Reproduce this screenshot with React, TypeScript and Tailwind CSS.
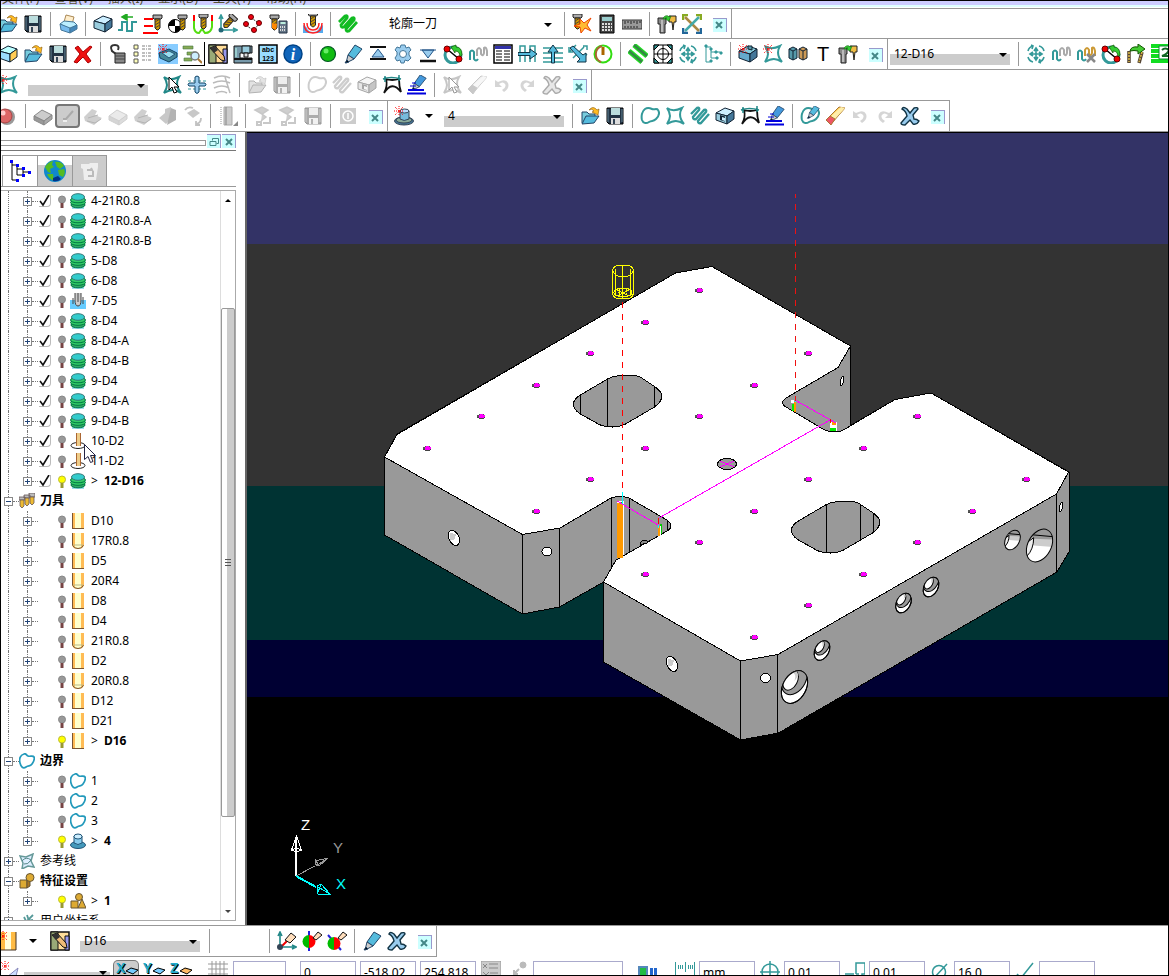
import React, { useState } from 'react';

// Small end mill reused by many toolbar icons.
const Mill = ({ t = '' }: { t?: string }) => (
  <g transform={t}>
    <path d="M0 0h9v3l-1 1H1L0 3z" fill="#aaa" stroke="#222" />
    <path d="M2 4h5v9l-2 2H4l-2-2z" fill="#c90" stroke="#222" />
    <path d="M2 7l5-3M2 10l5-3M2 13l5-3" stroke="#543" />
  </g>
);

const Spark = () => (
  <path d="M5 0v10M0 5h10M1 1l8 8M9 1L1 9" stroke="#f00" strokeDasharray="1 1" />
);

const Serp = ({ c, w = 2.4 }: { c: string; w?: number }) => (
  <path d="M1 8L7 2q3-1 2 2L3 11q0 3 3 2l8-9q3-1 2 2L8 15q0 3 3 2l8-9" fill="none" stroke={c} strokeWidth={w} />
);

const Box = ({ a = '#9cd', b = '#cef', c = '#479' }) => (
  <g stroke="#123" strokeLinejoin="round">
    <path d="M1 7l9-5 9 3-7 5z" fill={b} />
    <path d="M1 7l11 3v8L1 14z" fill={a} />
    <path d="M12 10l7-5v8l-7 5z" fill={c} />
  </g>
);

const LoopPath = ({ c = '#399' }) => (
  <path d="M5 3c-3 2-4 7-3 11 1 3 4 4 7 2s4 0 7-3 4-6 2-9c-1-2-4 0-6-1s-4-2-7 0z" fill="none" stroke={c} strokeWidth="2" />
);

const StarPath = ({ c = '#399' }) => (
  <path d="M2 2c4 3 9 3 15 0-3 5-3 10 2 16-6-4-10-4-17 0 4-6 4-10 0-16z" fill="none" stroke={c} strokeWidth="2" />
);

const PenShape = ({ f = '#5bd' }) => (
  <g stroke="#246">
    <path d="M12 1l7 4-8 10-6-4z" fill={f} />
    <path d="M5 11l6 4-8 4z" fill="#ccc" />
    <path d="M4 16l2 2-4 1z" fill="#000" />
  </g>
);

const MoveShape = ({ c = '#399' }) => (
  <path d="M10 5v10M5 10h10M8 7l2-3 2 3M8 13l2 3 2-3M7 8l-3 2 3 2M13 8l3 2-3 2M2 7q1-4 5-5M5 1l2 1-1 3M18 7q-1-4-5-5M2 13q1 4 5 5M18 13q-1 4-5 5M15 19l-2-1 1-3" fill="none" stroke={c} strokeWidth="1.6" />
);

const ToolPair = () => (
  <g stroke="#222">
    <path d="M1 4h8v6H8v9H3v-9H1z" fill="#888" />
    <path d="M5 6v12" stroke="#eee" />
    <path d="M12 2h7v6h-2l-1 8-1-8h-3z" fill="#eb4" />
    <path d="M6 5c1-4 5-4 6-2l2-1-2 5-4-2 2-1q-2-1-2 1z" fill="#3c3" stroke="#161" strokeWidth=".6" />
  </g>
);

const LinkShape = () => (
  <g>
    <circle cx="10" cy="11" r="8" fill="none" stroke="#399" strokeWidth="3" />
    <path d="M4 5l12 10" stroke="#000" strokeWidth="1.5" />
    <path d="M8 3l5-2v2q6 0 6 8l-2 2q0-6-5-6v2z" fill="#3c3" stroke="#150" strokeWidth=".7" />
    <circle cx="4" cy="5" r="3" fill="#e00" stroke="#600" />
    <circle cx="16" cy="15" r="3" fill="#e00" stroke="#600" />
  </g>
);

const icons: Record<string, React.ReactNode> = {
  open: (
    <g strokeLinejoin="round">
      <path d="M2 17V6h5l2 2h6v3" fill="#7cd" stroke="#246" />
      <path d="M2 18l4-8h13l-5 7z" fill="#5bd" stroke="#246" />
      <path d="M9 4q4-5 8 0l2-1-1 6-6-3 2-1q-2-3-5-1z" fill="#fb2" stroke="#850" strokeWidth=".6" />
    </g>
  ),
  save: (
    <g>
      <path d="M2 2h16v16H4l-2-2z" fill="#234" stroke="#000" />
      <path d="M6 2h9v7H6z" fill="#bdd" />
      <path d="M6 12h9v6H6z" fill="#ddd" />
      <path d="M8 13h2v5H8z" fill="#345" />
      <path d="M3 3v13M17 3v13" stroke="#689" />
    </g>
  ),
  print: (
    <g strokeLinejoin="round">
      <path d="M6 8l2-7 8 2-2 7z" fill="#fec" stroke="#a85" />
      <path d="M2 10l4-3 10 1 3 3-7 4z" fill="#bef" stroke="#479" />
      <path d="M2 10l10 4v5L3 16z" fill="#7be" stroke="#479" />
      <path d="M12 14l7-3v4l-7 4z" fill="#48b" stroke="#479" />
    </g>
  ),
  box: <Box />,
  boxYellow: <Box a="#9df" b="#bff" c="#fc5" />,
  boxHole: (
    <g>
      <Box />
      <path d="M5 9l5 1.500v5L5 14z" fill="#123" />
      <path d="M7 11l3 1v3l-3-1z" fill="#cef" />
    </g>
  ),
  rapid: (
    <g fill="none">
      <path d="M0 16h4V8h5v9h5V8h5" stroke="#399" strokeWidth="2" />
      <path d="M5 3h10M4 3l5-3v6z" stroke="#2a2" fill="#2a2" strokeWidth="1.5" />
    </g>
  ),
  feed: (
    <g>
      <path d="M1 5h9M1 12h9M0 19h15" stroke="#f00" strokeWidth="2" />
      <Mill t="translate(10 1)" />
    </g>
  ),
  start: (
    <g>
      <circle cx="7" cy="12" r="6.5" fill="#fff" stroke="#000" />
      <path d="M7 12V5.500A6.500 6.500 0 0 0 .5 12zM7 12v6.500A6.500 6.500 0 0 0 13.500 12z" fill="#000" />
      <Mill t="translate(10 1)" />
    </g>
  ),
  lead: (
    <g>
      <path d="M1 1v7M19 1v7" stroke="#f00" strokeWidth="2" />
      <path d="M1 7v7q1 5 5 5l3-4 3 4q6 0 7-6V7" fill="none" stroke="#5d1" strokeWidth="2" />
      <Mill t="translate(6 0)" />
    </g>
  ),
  axis: (
    <g>
      <path d="M3 16V3M3 16h14M1 5l2-4 2 4M15 14l4 2-4 2" fill="none" stroke="#399" strokeWidth="1.6" />
      <Mill t="translate(13 -1) rotate(42)" />
      <circle cx="3" cy="16" r="2.5" fill="#267" />
    </g>
  ),
  points: (
    <g fill="#e01" stroke="#600">
      <path d="M8 4l8 5-5 8M3 11l8 6" stroke="#333" strokeDasharray="2 1" fill="none" />
      <circle cx="8" cy="3" r="2.500" />
      <circle cx="16" cy="9" r="2.500" />
      <circle cx="3" cy="10" r="2.500" />
      <circle cx="11" cy="16" r="2.500" />
    </g>
  ),
  millCalc: (
    <g>
      <Mill t="translate(2 1)" />
      <path d="M11 7h8v12h-8z" fill="#678" stroke="#234" />
      <path d="M12.500 9h5" stroke="#bed" strokeWidth="2" />
      <path d="M12 13h6M12 16h6" stroke="#ddd" strokeDasharray="1 1" strokeWidth="2" />
      <path d="M4 9l5 1-1 6-4-2z" fill="#f80" />
    </g>
  ),
  collide: (
    <g>
      <path d="M0 19V11l5 3h10l5-3v8z" fill="#5ae" />
      <path d="M3 9q0 9 7 9t7-9z" fill="#fff" />
      <path d="M1 9q0 10 9 10t9-10M4 9q0 7 6 7t6-7" fill="none" stroke="#f22" strokeWidth="1.5" />
      <Mill t="translate(5.500 -2)" />
    </g>
  ),
  hatch: <Serp c="#1b2" w={2.8} />,
  serp: <Serp c="#399" />,
  serpPair: (
    <g fill="none" strokeWidth="2">
      <path d="M2 16V8q2-3 4 0v7q2 3 4 0" stroke="#399" />
      <path d="M9 12V6q2-4 4 0v4q2 3 3-1V4q2-2 3 3v5" stroke="#aaa" />
    </g>
  ),
  serpDel: (
    <g fill="none" strokeWidth="2">
      <path d="M2 16V8q2-3 4 0v7q2 3 4 0" stroke="#399" />
      <path d="M9 12V6q2-4 4 0v4q2 3 3-1V4q2-2 3 3v5" stroke="#c93" />
      <path d="M11 10l8 8M19 10l-8 8" stroke="#888" strokeWidth="2.500" />
    </g>
  ),
  millStar: (
    <g>
      <Mill t="translate(1 0)" />
      <path d="M8 5l4 4 7-5-4 7 4 6-6-3-4 5-1-6-6-1 6-2z" fill="#fb3" stroke="#e40" />
    </g>
  ),
  calc: (
    <g>
      <path d="M3 1h14v18H3z" fill="#444" stroke="#000" />
      <path d="M5 3h10v4H5z" fill="#9cc" />
      <path d="M5 10h10M5 13h10M5 16h10" stroke="#ddd" strokeWidth="2" strokeDasharray="2 1" />
    </g>
  ),
  ruler: (
    <g>
      <path d="M0 6h20v9H0z" fill="#999" stroke="#333" />
      <path d="M3 7v3M6 7v2M9 7v3M12 7v2M15 7v3M18 7v2M3 14v-2M6 14v-2M9 14v-2M12 14v-2M15 14v-2" stroke="#222" />
    </g>
  ),
  toolPair: <ToolPair />,
  crossArrows: (
    <g fill="none" strokeWidth="2.500">
      <path d="M3 3l14 14" stroke="#a84" />
      <path d="M17 3L3 17" stroke="#4aa" />
      <path d="M1 6V1h5M14 1h5v5" stroke="#8a2" />
      <path d="M1 14v5h5M14 19h5v-5" stroke="#269" />
    </g>
  ),
  del: <path d="M2 4l3-2 5 6 7-6 2 1-6 7 5 7-3 2-5-6-6 6-3-1 6-8z" fill="#e11" stroke="#a00" />,
  unlock: (
    <g>
      <path d="M8 10L4 7Q1 1 7 1q5 0 3 5" fill="none" stroke="#333" strokeWidth="2" />
      <path d="M7 9h10v10H7z" fill="#888" stroke="#222" />
      <path d="M7 12h10M7 15h10" stroke="#444" />
    </g>
  ),
  list: (
    <g>
      <path d="M1 1h4v4H1zM1 8h4v4H1zM1 15h4v4H1z" fill="#ffb" stroke="#555" />
      <path d="M9 2h10M9 5h10M9 9h10M9 12h10M9 16h10" stroke="#aaa" strokeDasharray="3 1 1 1" strokeWidth="1.5" />
    </g>
  ),
  blockNew: (
    <g>
      <path d="M0 0h20v20H0z" fill="#8cf" />
      <path d="M1 9l10-4 8 4v4l-8 5-9-4z" fill="#489" stroke="#146" />
      <path d="M4 9l7-2 6 3-6 4z" fill="#9de" stroke="#257" />
      <Spark />
    </g>
  ),
  search: (
    <g>
      <path d="M1 2h10v3H1zM5 8h9v3H5zM2 14h8v3H2z" fill="#8a5" stroke="#474" strokeWidth=".6" />
      <circle cx="13" cy="12" r="4" fill="#cef" stroke="#777" strokeWidth="1.500" />
      <path d="M16 15l4 4" stroke="#a73" strokeWidth="2" />
    </g>
  ),
  toolFrame: (
    <g>
      <path d="M1 1h18v18H1z" fill="#fd9" stroke="#111" strokeWidth="1.500" />
      <path d="M1 1h7v18H1z" fill="#9a7" stroke="#111" />
      <path d="M15 5h4v14h-4z" fill="#99e" stroke="#111" />
      <path d="M2 4l5-2 9 10 1 5-4-1z" fill="#eb7" stroke="#111" />
      <path d="M2 4l5-2 3 4-4 3z" fill="#333" />
    </g>
  ),
  machine: (
    <g>
      <path d="M1 2h18v7H7v5h12v5H1z" fill="#79a" stroke="#111" />
      <path d="M9 2h8v7H9z" fill="#9cd" stroke="#111" />
      <path d="M11 9h4v4h-4z" fill="#ddd" stroke="#111" />
      <path d="M1 15h18" stroke="#111" strokeWidth="2" />
      <path d="M3 4v9" stroke="#9cc" strokeWidth="2" />
    </g>
  ),
  abc: (
    <g>
      <path d="M1 1h18v18H1z" fill="#9df" stroke="#000" strokeWidth="1.500" />
      <text x="10" y="8" fontSize="7" fontWeight="bold" textAnchor="middle" fontFamily="Liberation Sans">abc</text>
      <text x="10" y="17" fontSize="7" fontWeight="bold" textAnchor="middle" fontFamily="Liberation Sans">123</text>
    </g>
  ),
  info: (
    <g>
      <circle cx="10" cy="10" r="9" fill="#16b" stroke="#048" strokeWidth="1.500" />
      <text x="10" y="16" fontSize="16" fontWeight="bold" fontStyle="italic" fill="#fff" textAnchor="middle" fontFamily="Liberation Serif">i</text>
    </g>
  ),
  ball: (
    <g>
      <circle cx="10" cy="10" r="7.500" fill="#1b1" stroke="#052" strokeWidth="1.200" />
      <circle cx="8" cy="7" r="2.500" fill="#6e6" />
    </g>
  ),
  redBall: (
    <g>
      <circle cx="9" cy="11" r="8" fill="#999" />
      <circle cx="7" cy="10" r="7" fill="#d66" stroke="#a44" />
      <circle cx="5" cy="7" r="2.500" fill="#fcc" />
    </g>
  ),
  pen: <PenShape />,
  planeUp: (
    <g stroke="#111" fill="#9ce">
      <path d="M2 3h16M2 15h16" strokeWidth="2" />
      <path d="M10 5l6 8H4z" stroke="#258" />
    </g>
  ),
  planeDown: (
    <g stroke="#111" fill="#9ce">
      <path d="M2 17h16" strokeWidth="2.500" />
      <path d="M10 14l6-8H4z" stroke="#258" />
      <path d="M2 6h16" stroke="#258" />
    </g>
  ),
  gear: (
    <g stroke="#479" fill="#9ce">
      <path d="M8 1h4l1 3 3-1 2 3-2 2v3l2 3-3 3-3-1-1 3H8l-1-3-3 1-2-3 2-3V8L2 6l2-3 3 1z" />
      <circle cx="10" cy="10" r="3.500" fill="#fff" />
    </g>
  ),
  link: <LinkShape />,
  table: (
    <g>
      <path d="M1 1h18v18H1z" fill="#fff" stroke="#000" strokeWidth="1.500" />
      <path d="M2 2h16v3H2z" fill="#33a" />
      <path d="M3 7h6M3 10h6M3 13h6M3 16h6M11 7h6M11 10h6M11 13h6M11 16h6" stroke="#000" />
    </g>
  ),
  arrowRight: (
    <g>
      <path d="M2 18V2h5v16M12 18V2h5v16" fill="none" stroke="#399" strokeWidth="1.500" />
      <path d="M0 8.500h12V5l7 5-7 5v-3.500H0z" fill="#5bd" stroke="#134" />
    </g>
  ),
  arrowUp: (
    <g>
      <path d="M0 4h20M0 9h20M0 14h20M0 18h20" stroke="#399" strokeWidth="1.500" />
      <path d="M8.500 19V8H5l5-7 5 7h-3.500v11z" fill="#5bd" stroke="#134" />
    </g>
  ),
  arrowDiag: (
    <g>
      <path d="M1 8l7-7M5 14L16 3M11 18l8-8M1 3v5h4M15 2h4v4" fill="none" stroke="#399" strokeWidth="1.500" />
      <path d="M2 4l3-2 10 9 3-2v9h-9l3-3z" fill="#5bd" stroke="#134" />
    </g>
  ),
  clock: (
    <g fill="none" strokeWidth="2">
      <circle cx="10" cy="10" r="8.500" stroke="#3d1" />
      <path d="M9 2A8.500 8.500 0 0 0 8 18" stroke="#a63" />
      <path d="M10 3v8" stroke="#a60" strokeWidth="3" />
    </g>
  ),
  stripes: (
    <g>
      <path d="M1 7l13 11M6 1l13 11" stroke="#2d2" strokeWidth="5" />
      <path d="M1 7l13 11M6 1l13 11" stroke="#384" strokeWidth="2.500" />
    </g>
  ),
  target: (
    <g fill="none" stroke="#000">
      <path d="M1 1h18v18H1zM10 1v18M1 10h18" />
      <circle cx="10" cy="10" r="5.500" />
      <path d="M1 6V1h5zM14 1h5v5zM1 14v5h5zM19 14v5h-5z" fill="#399" />
    </g>
  ),
  move: <MoveShape />,
  tree: (
    <g fill="#399" stroke="#399">
      <path d="M3 2v16h4M3 3h5M8 5v9h5M8 8h9" fill="none" />
      <path d="M2 1h2v2H2zM7 4h2v2H7zM12 7h2v2h-2zM7 16h2v2H7zM13 13h2v2h-2zM17 8h2v2h-2z" />
    </g>
  ),
  boxNew: (
    <g>
      <Box a="#6ac" b="#8cd" />
      <path d="M10 2v3l4 1V2z" fill="#59a" stroke="#123" />
      <Spark />
    </g>
  ),
  starNew: (
    <g>
      <StarPath />
      <Spark />
    </g>
  ),
  star: <StarPath />,
  mirror: (
    <g stroke="#123">
      <path d="M1 5l4-2 4 2v9l-4 2-4-2z" fill="#59a" />
      <path d="M11 5l4-2 4 2v9l-4 2-4-2z" fill="#c95" />
      <path d="M5 7v9M15 7v9M1 5l4 2 4-2M11 5l4 2 4-2" fill="none" />
    </g>
  ),
  letterT: <text x="10" y="17" fontSize="20" textAnchor="middle" fontFamily="Liberation Sans">T</text>,
  swap: (
    <g>
      <path d="M3 7v12M16 8l-3 11" stroke="#543" strokeWidth="3.500" />
      <path d="M3 8v10M16 8l-3 10" stroke="#db4" strokeWidth="1.500" strokeDasharray="2 1" />
      <path d="M4 7q1-5 8-4V0l7 5-7 5V7q-4-1-8 0z" fill="#4c3" stroke="#150" />
    </g>
  ),
  refresh: (
    <g>
      <path d="M0 2h20M0 7h20M0 12h20M0 17h20" stroke="#1d2" strokeWidth="4" />
      <path d="M8 2h12v13H8z" fill="#fff" stroke="#183" />
      <path d="M11 6q3-3 7 0-1 4-7 6h8" fill="none" stroke="#162" strokeWidth="2" />
    </g>
  ),
  starCursor: (
    <g>
      <StarPath c="#288" />
      <path d="M7 2v13l3-3 2 6 3-1-3-5h5z" fill="#fff" stroke="#000" />
    </g>
  ),
  plus: (
    <g>
      <path d="M1 6h18M1 14h18" stroke="#399" strokeDasharray="3 2" />
      <path d="M8 2q2-2 4 0v6h6q2 2 0 3h-6v6q-2 3-4 0v-6H2q-2-1 0-3h6z" fill="#9ce" stroke="#146" />
    </g>
  ),
  ribs: (
    <path d="M2 3q8-4 16 0M1 8q9-4 17 0M2 13q8-4 15 0M4 18q6-3 11 0M13 2l5 16" fill="none" stroke="#bbb" strokeWidth="1.500" />
  ),
  loop: <LoopPath />,
  surf: (
    <g fill="none">
      <path d="M2 18Q6 11 4 4q6 2 13 0 0 7 2 13Q10 5 2 18z" stroke="#111" strokeWidth="1.800" />
      <path d="M1 4q8-3 18 0M3 1v6M17 0v6" stroke="#288" strokeWidth="1.500" />
    </g>
  ),
  penLine: (
    <g>
      <g transform="translate(3 -1) scale(.85)">
        <PenShape f="#49d" />
      </g>
      <path d="M1 15h16M0 18.500h19" stroke="#00d" strokeWidth="2" />
      <path d="M3 11h6M5 8h4" stroke="#00d" />
    </g>
  ),
  loopPen: (
    <g>
      <LoopPath />
      <g transform="translate(6 -1) scale(.7)">
        <PenShape />
      </g>
    </g>
  ),
  eraser: (
    <g stroke="#a73" strokeLinejoin="round">
      <path d="M1 14L14 1l6 1L7 17z" fill="#fc5" />
      <path d="M5 11L16 1l4 1L8 15z" fill="#fea" stroke="none" />
      <path d="M1 14l4-4 5 3-4 6z" fill="#e56" />
    </g>
  ),
  undo: <path d="M3 5v7h7L7 9q4-3 6 0t-3 6l2 2q6-4 4-9T6 7z" fill="#999" />,
  redo: <path d="M17 5v7h-7l3-3q-4-3-6 0t3 6l-2 2Q2 13 4 8t10-1z" fill="#999" />,
  bigX: <path d="M2 3q1-3 5 0l3 4 4-5q4-1 4 1l-5 6 1 4q3 0 5 2-2 4-6 3l-3-4-5 5q-4 0-4-2l6-7q-1-5-5-7z" fill="#9ce" stroke="#134" strokeWidth="1.400" />,
  slab: (
    <g stroke="#888">
      <path d="M1 10l8-6 10 5-8 6z" fill="#ccc" />
      <path d="M1 10l10 5v4L1 14z" fill="#999" />
      <path d="M11 15l8-6v4l-8 6z" fill="#aaa" />
    </g>
  ),
  slabCut: (
    <g fill="#888">
      <path d="M1 11l8-8 5 2-2 4 7 3-8 7-9-4z" />
      <path d="M5 12l10-3M4 15l8 2 6-4" stroke="#444" fill="none" />
    </g>
  ),
  ramp: (
    <g>
      <path d="M5 13h3l7-8" fill="none" stroke="#aaa" strokeWidth="2" />
      <path d="M5 15h4" stroke="#eee" strokeWidth="2" />
    </g>
  ),
  wallCut: (
    <g fill="#777">
      <path d="M1 12l6-5V3l6-2v12l-5 5z" />
      <path d="M13 2l5 2v10l-9 5z" fill="#444" />
    </g>
  ),
  spin: (
    <g fill="#777">
      <path d="M4 7l7-4 6 4-7 5z" />
      <path d="M2 4q3-4 8-2M18 12q0 5-5 6M13 15v4l4 0" fill="none" stroke="#666" strokeWidth="1.800" />
    </g>
  ),
  bars: (
    <g>
      <path d="M3 1v18" stroke="#999" strokeDasharray="1 1" />
      <path d="M6 1h8v18H6z" fill="#ccc" stroke="#aaa" />
      <path d="M8 1v18" stroke="#888" />
      <path d="M20 15v5h-5z" fill="#888" />
    </g>
  ),
  route: (
    <g fill="none" stroke="#777">
      <path d="M2 4l7-3 6 3-6 4zM9 8l4 3-5 4" fill="#888" strokeWidth="1.500" />
      <path d="M4 16h4v3H4zM10 17h7v-6" strokeWidth="2" />
    </g>
  ),
  power: (
    <g>
      <path d="M2 2h16v16H2z" fill="#ccc" />
      <circle cx="10" cy="10" r="5" fill="none" stroke="#fff" strokeWidth="1.500" />
      <path d="M10 7v6" stroke="#fff" strokeWidth="1.500" />
    </g>
  ),
  hatNew: (
    <g stroke="#345">
      <ellipse cx="10" cy="15" rx="9.500" ry="4" fill="#479" />
      <ellipse cx="10" cy="14" rx="8" ry="3" fill="#8a9" />
      <path d="M6 5v8q4 3 9 0V5z" fill="#7bd" />
      <ellipse cx="10.500" cy="5" rx="4.500" ry="2" fill="#bdf" />
      <Spark />
    </g>
  ),
  toolNew: (
    <g>
      <path d="M3 1h15v18H3z" fill="#fb4" />
      <path d="M7 1h6v18H7z" fill="#ffd" />
      <path d="M3 19h15M18 1v18" stroke="#432" />
      <Spark />
    </g>
  ),
  axisTool: (
    <g>
      <path d="M3 16V3M3 16h14M1 5l2-4 2 4M15 14l4 2-4 2" fill="none" stroke="#288" strokeWidth="1.600" />
      <path d="M5 15l6-6" stroke="#e00" strokeWidth="2" />
      <path d="M8 9l6-7 5 4-6 6z" fill="#fdb" stroke="#111" />
      <circle cx="3" cy="16" r="3" fill="#345" />
    </g>
  ),
  ballSplit: (
    <g>
      <path d="M7 0v20" stroke="#22d" strokeWidth="2" />
      <path d="M7 4a6.500 6.500 0 0 0 0 13z" fill="#0b0" />
      <path d="M7 4a6.500 6.500 0 0 1 0 13z" fill="#f00" />
      <path d="M11 7l5-6 4 3-6 5z" fill="#fdb" stroke="#111" />
    </g>
  ),
  ballTilt: (
    <g>
      <path d="M1 4l13 15" stroke="#22d" strokeWidth="2" />
      <path d="M7 6a6.500 6.500 0 0 0 0 13z" fill="#0b0" />
      <path d="M7 6a6.500 6.500 0 0 1 0 13z" fill="#f00" />
      <path d="M11 7l5-6 4 3-6 5z" fill="#fdb" stroke="#111" />
    </g>
  ),
  wand: (
    <g>
      <path d="M3 18l4-2 11-9-2 8-6 5z" fill="#cdf" stroke="#88b" />
      <Spark />
    </g>
  ),
  grid: <path d="M4 0v20M8 0v20M12 0v20M16 0v20M0 3h20M0 8h20M0 13h20" stroke="#999" />,
  xyList: (
    <g>
      <path d="M0 0h20v20H0z" fill="#ccc" stroke="#999" />
      <path d="M2 3l4 4M6 3L2 7M8 3h9M8 7h9M2 11l3 3 3-3M9 12h8" stroke="#888" fill="none" />
    </g>
  ),
  snap: (
    <g stroke="#bbb" fill="#bbb">
      <circle cx="15" cy="4" r="3" />
      <path d="M11 8l-5 5M6 9v4h4" fill="none" strokeWidth="2" />
    </g>
  ),
  screen: (
    <g>
      <path d="M1 6h8v12H1z" fill="#2b4" stroke="#58b" strokeWidth="2" />
      <path d="M12 7h3v10h-3zM16 7h3v10h-3z" fill="#26c" />
    </g>
  ),
  dim: <path d="M.5 1v19M19.500 1v19M10.500 1v10M3.500 4v4M5.500 4v4M7.500 4v4M13.500 4v4M15.500 4v4M17.500 4v4" stroke="#399" fill="none" />,
  cross: (
    <g fill="none" stroke="#399" strokeWidth="1.500">
      <circle cx="10" cy="11" r="8" />
      <path d="M10 0v20M0 11h20" />
    </g>
  ),
  stock: <path d="M11 13V2h9v11h-3v6M11 13h3M0 13h9" fill="none" stroke="#399" strokeWidth="1.500" />,
  diam: (
    <g fill="none" stroke="#399" strokeWidth="1.500">
      <circle cx="9" cy="11" r="6.500" />
      <path d="M3 18L17 3" />
    </g>
  ),
  tick: <path d="M2 13l4 4L18 2" fill="none" stroke="#399" strokeWidth="1.500" />,
};

const Icon = ({ name }: { name: string }) => {
  const off = name.startsWith('~');
  return (
    <svg viewBox="0 0 20 20" className={`h-5 w-5 shrink-0 ${off ? 'opacity-40 grayscale' : ''}`}>
      {icons[off ? name.slice(1) : name]}
    </svg>
  );
};

const Sep = () => (
  <span className="flex w-[10px] shrink-0 justify-center">
    <span className="h-6 w-px bg-[#999]" />
  </span>
);

// A "|" in the list draws a separator, a leading "~" greys the icon out.
const Tools = ({ names }: { names: string[] }) => (
  <>
    {names.map((n, i) =>
      n === '|' ? (
        <Sep key={i} />
      ) : (
        <button
          key={i}
          type="button"
          aria-label={n.replace('~', '')}
          disabled={n.startsWith('~')}
          className={`flex h-6 w-[25px] shrink-0 items-center justify-center ${n === 'ramp' ? 'rounded border-2 border-[#777] bg-[#ccc]' : ''} ${n === 'search' ? 'border-r border-b border-black' : ''}`}
        >
          <Icon name={n} />
        </button>
      )
    )}
  </>
);

const CloseBox = () => (
  <button type="button" aria-label="close" className="flex h-[14px] w-[14px] items-center justify-center border-t border-r border-[#99c] bg-[#cff]">
    <svg viewBox="0 0 8 8" className="h-2 w-2">
      <path d="M1 1l6 6M7 1L1 7" stroke="#488" strokeWidth="2" />
    </svg>
  </button>
);

const CloseCell = () => (
  <span className="flex w-[27px] shrink-0 items-center justify-center pl-1 pt-0.5">
    <CloseBox />
  </span>
);

const DownArrow = () => (
  <svg viewBox="0 0 8 4" className="h-1 w-2 shrink-0">
    <path d="M0 0h8L4 4z" />
  </svg>
);

interface ComboProps {
  label: string;
  value: string;
  className: string;
}

const Combo = ({ label, value, className }: ComboProps) => (
  <div className={`relative h-[22px] shrink-0 ${className}`}>
    <select aria-label={label} className="h-full w-full appearance-none pl-1 text-xs outline-none">
      <option>{value}</option>
    </select>
    <span className="pointer-events-none absolute top-[10px] right-[3px]">
      <DownArrow />
    </span>
  </div>
);

const shaded = 'w-[120px] bg-linear-to-b from-white from-50% to-[#ccc] to-50%';

const ArrowButton = () => (
  <button type="button" aria-label="more" className="flex h-6 w-[25px] shrink-0 items-center justify-center">
    <DownArrow />
  </button>
);

interface Node {
  label: string;
  kind: string;
  root?: boolean;
  open?: boolean;
  active?: boolean;
  check?: boolean;
}

const path = (label: string, kind = 'path'): Node => ({ label, kind, check: true });
const tool = (label: string): Node => ({ label, kind: label.includes('R') ? 'ballTool' : 'tool' });

const nodes: Node[] = [
  path('4-21R0.8'),
  path('4-21R0.8-A'),
  path('4-21R0.8-B'),
  path('5-D8'),
  path('6-D8'),
  path('7-D5', 'drill'),
  path('8-D4'),
  path('8-D4-A'),
  path('8-D4-B'),
  path('9-D4'),
  path('9-D4-A'),
  path('9-D4-B'),
  path('10-D2', 'swarf'),
  path('11-D2', 'swarf'),
  { ...path('12-D16'), active: true },
  { label: '刀具', kind: 'tools', root: true, open: true },
  ...['D10', '17R0.8', 'D5', '20R4', 'D8', 'D4', '21R0.8', 'D2', '20R0.8', 'D12', 'D21'].map(tool),
  { ...tool('D16'), active: true },
  { label: '边界', kind: 'bound', root: true, open: true },
  { label: '1', kind: 'bound' },
  { label: '2', kind: 'bound' },
  { label: '3', kind: 'bound' },
  { label: '4', kind: 'hat', active: true },
  { label: '参考线', kind: 'pattern', root: true },
  { label: '特征设置', kind: 'feature', root: true, open: true },
  { label: '1', kind: 'shapes', active: true },
  { label: '用户坐标系', kind: 'planes', root: true },
];

const nodeIcons: Record<string, React.ReactNode> = {
  path: (
    <g>
      <path d="M2 11h12v5H2z" fill="#9de" />
      <ellipse cx="8" cy="12" rx="7" ry="2.800" fill="#3a6" stroke="#074" />
      <ellipse cx="8" cy="9.500" rx="7.500" ry="2.800" fill="#3c6" stroke="#074" />
      <ellipse cx="8" cy="7" rx="7.500" ry="2.800" fill="#3c6" stroke="#074" />
      <ellipse cx="8" cy="4" rx="6.500" ry="3.300" fill="#3cc" stroke="#377" />
    </g>
  ),
  drill: (
    <g>
      <path d="M0 7h16v9H0z" fill="#6cf" />
      <path d="M5 0v7q0 6 3 6t3-6V0" fill="#ccc" stroke="#444" />
      <path d="M8 0v9M3 5v6M13 4v7" stroke="#444" />
    </g>
  ),
  swarf: (
    <g>
      <ellipse cx="8" cy="12.500" rx="7" ry="3" fill="#fff" stroke="#222" />
      <path d="M6 0h5v13H6z" fill="#ec8" />
      <path d="M6.500 0v13M10.500 0v13" stroke="#a63" />
    </g>
  ),
  tools: (
    <g stroke="#655" strokeWidth=".8">
      <path d="M0 4h6v3H0zM5 2h6v3H5zM10 0h6v4h-6z" fill="#bbb" />
      <path d="M1 7h4v6l-2 2-2-2zM6 5h4v6l-2 2-2-2zM11 4h4v6l-2 2-2-2z" fill="#eb3" />
    </g>
  ),
  tool: (
    <g>
      <path d="M2 0h12v15H2z" fill="#fb5" />
      <path d="M5 0h6v15H5z" fill="#ffc" />
      <path d="M2 15.500h12M2.500 0v15" stroke="#753" />
    </g>
  ),
  ballTool: (
    <g>
      <path d="M2 0h12v12q-1 4-6 4t-6-4z" fill="#fb5" />
      <path d="M5 0h6v15H5z" fill="#ffc" />
      <path d="M2.500 0v12q1 3.500 5.500 3.500t5.500-3.500" stroke="#753" fill="none" />
      <path d="M3 12h10" stroke="#bb8" />
    </g>
  ),
  bound: <path d="M5 1C1 2 0 6 1 10c1 4 3 6 6 4s4 0 6-3 3-5 2-7-4 0-6-1-2-3-4-2z" fill="none" stroke="#29b" strokeWidth="1.700" />,
  hat: (
    <g stroke="#257">
      <ellipse cx="8" cy="12" rx="7.500" ry="3.500" fill="#49b" />
      <path d="M4 3v7q4 3 8 0V3z" fill="#8ce" />
      <ellipse cx="8" cy="3.500" rx="4" ry="2.500" fill="#cef" />
    </g>
  ),
  pattern: (
    <g fill="none" stroke="#699">
      <path d="M1 3l6 1 7-3-2 7 3 6-6-1-6 3 1-6z" fill="#def" strokeWidth="1.500" />
      <path d="M3 8q4-5 9-1-3 5-7 4" stroke="#588" />
    </g>
  ),
  feature: (
    <g stroke="#653" fill="#da3">
      <path d="M1 7h7v8H1z" />
      <path d="M8 7l3 2v4l-3 2z" fill="#a72" />
      <circle cx="11" cy="4.500" r="4" />
    </g>
  ),
  shapes: (
    <g stroke="#653" fill="#da3">
      <circle cx="9" cy="4" r="3.500" />
      <path d="M1 8h7v7H1z" />
      <path d="M12 6l4 9H8z" />
    </g>
  ),
  planes: <path d="M2 14L14 2M5 4l5 10M2 9l12-2M8 2l2 6" stroke="#599" strokeWidth="1.800" />,
};

const Expander = ({ open }: { open?: boolean }) => (
  <button type="button" aria-label={open ? 'collapse' : 'expand'} className="flex h-[9px] w-[9px] shrink-0 items-center justify-center border border-[#888]">
    <svg viewBox="0 0 7 7" className="h-[7px] w-[7px] shrink-0">
      <path d={open ? 'M1 3.500h5' : 'M1 3.500h5M3.500 1v5'} stroke="#247" />
    </svg>
  </button>
);

const Bulb = ({ on }: { on?: boolean }) => (
  <svg viewBox="0 0 12 16" className="h-4 w-3 shrink-0">
    <circle cx="6" cy="6.500" r="3.500" fill={on ? '#ff0' : '#999'} stroke={on ? '#bb3' : '#888'} />
    <path d="M4.500 10h3v5h-3z" fill={on ? '#993' : '#744'} />
  </svg>
);

const VLine = ({ show = true }: { show?: boolean }) => (
  <span className={`w-px flex-1 ${show ? 'border-l border-dotted border-[#777]' : ''}`} />
);

const TreeRow = ({ node, last }: { node: Node; last: boolean }) => {
  const [checked, setChecked] = useState(true);
  const label = (
    <span className="whitespace-nowrap">
      {node.active && <span className="mr-1.5">{'>'}</span>}
      <span className={node.active || (node.root && node.open) ? 'font-bold' : ''}>{node.label}</span>
    </span>
  );

  if (node.root) {
    return (
      <li className="flex h-5 items-center pl-[3px]">
        <span className="flex h-full w-[9px] flex-col items-center">
          <VLine />
          <Expander open={node.open} />
          <VLine />
        </span>
        <span className="w-1.5 border-t border-dotted border-[#777]" />
        <svg viewBox="0 0 16 16" className="mr-[5px] h-4 w-4">{nodeIcons[node.kind]}</svg>
        {label}
      </li>
    );
  }

  return (
    <li className="flex h-5 items-center">
      <span className="flex h-full w-[22px] flex-col pl-[7px]">
        <VLine />
      </span>
      <span className="flex h-full w-[9px] flex-col items-center">
        <VLine />
        <Expander />
        <VLine show={!last} />
      </span>
      <span className="w-1.5 border-t border-dotted border-[#777]" />
      <span className="w-[18px] pl-px">
        {node.check && (
          <label className="relative block h-3 w-3 rounded-br border-r border-b border-[#bbb]">
            <input type="checkbox" aria-label={node.label} checked={checked} onChange={() => setChecked(!checked)} className="absolute inset-0 appearance-none" />
            {checked && (
              <svg viewBox="0 0 12 12" className="pointer-events-none absolute inset-0 h-3 w-3">
                <path d="M1 6l3 4 6-10" fill="none" stroke="#111" strokeWidth="1.600" />
              </svg>
            )}
          </label>
        )}
      </span>
      <Bulb on={node.active} />
      <svg viewBox="0 0 16 16" className="mr-[5px] ml-0.5 h-4 w-4">{nodeIcons[node.kind]}</svg>
      {label}
    </li>
  );
};

const SidePanel = () => (
  <aside className="flex w-[246px] shrink-0 flex-col border-r-2 border-[#666] pr-[9px]">
    <div className="flex h-[19px] items-center gap-px border-b border-[#777]">
      <span className="mt-1 h-[6px] flex-1 border border-l-0 border-[#999]" />
      <button type="button" aria-label="restore" className="flex h-[14px] w-[14px] items-center justify-center border-t border-r border-[#99c] bg-[#cff]">
        <svg viewBox="0 0 10 10" className="h-[10px] w-[10px]">
          <path d="M3.500 3.500v-2h6v5h-2M1 4.500h6v4H1z" fill="none" stroke="#488" />
        </svg>
      </button>
      <CloseBox />
    </div>
    <div className="flex h-9 items-end border-b border-[#999] pt-1 pl-px">
      <button type="button" aria-label="tree" className="flex h-full w-[35px] items-center justify-center border-t border-l border-[#999]">
        <svg viewBox="0 0 22 22" className="h-[22px] w-[22px]">
          <path d="M3 1v19h6M3 5h5M8 5v10h7M8 9h6v5M14 12h6" fill="none" stroke="#000" />
          <path d="M1 0h3v3H1zM7 4h3v3H7zM13 7h3v3h-3zM19 11h3v3h-3zM13 14h3v3h-3zM7 19h3v3H7z" fill="#00f" />
        </svg>
      </button>
      <button type="button" aria-label="web" className="flex h-full w-[35px] items-center justify-center border-t border-l border-[#999] bg-linear-to-b from-white from-30% to-[#ccc] to-30%">
        <svg viewBox="0 0 22 22" className="h-[22px] w-[22px]">
          <circle cx="11" cy="11" r="11" fill="#18c" />
          <path d="M1 7q3-5 8-6l-1 4 2 2-4 2 1 4-3-1zM11 2q6-1 9 4l-4 3-3-2zM14 10l6-1q2 4-1 8l-4-2zM3 14l6 0 1 7q-5-2-7-7z" fill="#5b2" />
          <path d="M9 18l5-2 3 3q-3 3-8 2z" fill="#038" />
        </svg>
      </button>
      <button type="button" aria-label="recycle" className="flex h-full w-[35px] items-center justify-center border-t border-x border-[#999] bg-[#ccc]">
        <svg viewBox="0 0 20 20" className="h-5 w-5">
          <path d="M1 3h8l1-1h8v4l-2 13H4L3 8 1 7z" fill="#eee" />
          <path d="M7 9h5l-1-2M13 10v5H8" fill="none" stroke="#bbb" strokeWidth="2" />
        </svg>
      </button>
    </div>
    <div className="mt-[3px] mb-1 flex min-h-0 flex-1 border-t border-r border-b border-[#aaa]">
      <ul className="relative min-w-0 flex-1 overflow-hidden text-xs">
        {nodes.map((n, i) => (
          <TreeRow key={i} node={n} last={!!nodes[i + 1]?.root} />
        ))}
        <li aria-hidden className="pointer-events-none absolute top-[253px] left-[83px]">
          <svg viewBox="0 0 12 19" className="h-[19px] w-3">
            <path d="M.5.5v15l3.500-3 2.500 6 2.500-1-2.500-6h5z" fill="#fff" stroke="#224" />
          </svg>
        </li>
      </ul>
      <div className="flex w-[15px] flex-col border-l border-[#ddd]">
        <button type="button" aria-label="up" className="flex h-[18px] items-center justify-center">
          <svg viewBox="0 0 6 3" className="h-[3px] w-1.5"><path d="M0 3h6L3 0z" /></svg>
        </button>
        <span className="grow-[100]" />
        <span className="flex grow-[508] items-center justify-center rounded-xs border border-[#999] bg-linear-to-r from-white from-45% to-[#ccc] to-45%">
          <span className="h-[7px] w-1.5 border-y border-[#555] py-0.5">
            <span className="block h-px bg-[#555]" />
          </span>
        </span>
        <span className="grow-[86]" />
        <button type="button" aria-label="down" className="flex h-[18px] items-center justify-center">
          <svg viewBox="0 0 6 3" className="h-[3px] w-1.5"><path d="M0 0h6L3 3z" fill="#444" /></svg>
        </button>
      </div>
    </div>
  </aside>
);

const pocket = 'M580.500 395l27-16q5-3 12-3.500h14q6 .5 9 3l12 8q7 5 7.500 9.500-.5 6-7.500 11l-29 17q-6 3-13 3-10 0-16-4l-16-9q-7-4-7-10 0-5 7-9z';

// Counterbored hole on the right-hand face.
const Bore = ({ x, y, s }: { x: number; y: number; s: number }) => (
  <g transform={`translate(${x} ${y}) scale(${s})`} stroke="#000" strokeWidth={1 / s} shapeRendering="auto">
    <ellipse rx="12" ry="18" transform="rotate(28)" fill="#fff" />
    <g clipPath="url(#hole)">
      <ellipse rx="12" ry="18" transform="translate(0 -9) rotate(28)" fill="#999" />
      <ellipse rx="7" ry="11" transform="translate(-4 -7) rotate(28)" fill="#fff" />
      <path d="M-4-15q7 0 4 9l4-6-2-5z" fill="#ccc" stroke="none" />
    </g>
    <ellipse rx="12" ry="18" transform="rotate(28)" fill="none" />
  </g>
);

const Scoop = ({ x, y, s }: { x: number; y: number; s: number }) => (
  <g transform={`translate(${x} ${y}) scale(${s})`} strokeWidth={1 / s} shapeRendering="auto">
    <g clipPath="url(#hole)">
      <path d="M-20-20h40v40h-40z" fill="#fff" />
      <path d="M-20-20h40V2L-6 0z" fill="#ccc" />
      <path d="M-20-20h40v14l-26-1z" fill="#999" />
      <path d="M-7-11l22 2M-6-8q0 12-7 19-4-8 0-14z" fill="#eee" stroke="#000" />
    </g>
    <ellipse rx="12" ry="18" transform="rotate(28)" fill="none" stroke="#000" />
  </g>
);

const Viewport = () => {
  const dots: [number, number][] = [];
  for (let r = 0; r < 4; r++) {
    for (let c = 0; c < 6; c++) {
      dots.push([699.5 + r * 109 - c * 54.5, 290.7 + r * 63 + c * 31.5]);
    }
  }

  return (
    <svg viewBox="247 132 921 793" preserveAspectRatio="xMinYMin slice" className="h-full w-full" shapeRendering="crispEdges">
      <defs>
        <clipPath id="hole">
          <ellipse rx="12" ry="18" transform="rotate(28)" />
        </clipPath>
      </defs>
      <rect x="247" y="132" width="2000" height="1600" fill="#000" />
      <rect x="247" y="133" width="2000" height="111" fill="#336" />
      <rect x="247" y="244" width="2000" height="242" fill="#333" />
      <rect x="247" y="486" width="2000" height="154" fill="#033" />
      <rect x="247" y="640" width="2000" height="57" fill="#003" />

      {/* body and top face */}
      <path d="M384.500 457v78l138 79 37-7 44-25v80l137 78 38-7 278.500-161 12-20v-80L931 393l-36 6.500-44.500 26V346L712 267l-36 6-279 161z" fill="#999" stroke="#000" />
      <path
        d="M384.500 457l12.500-22.500L675.500 273l36.500-6.500L850.500 346 838 367.500 786 398q-7 5 0 9l37 22q6 3 10 3 8 0 12-3l50-29.500 36-6.500 137.500 79-12 22L778 654.500l-37.500 6.500-137-79 12.500-22 51-29q8-5 0-11l-38-22q-9-3-18 0l-51 30-37.500 6.500z"
        fill="#fff"
        stroke="#000"
      />
      <path d="M522.500 535v79M559.500 528v79M611.500 498v70M629.500 498v55M667.500 520v11M740.500 661v79M777.500 654v79M1056.500 494v79M850.500 346v79M603.500 582v79" stroke="#000" />

      <path d={pocket} fill="#999" stroke="#000" />
      <path d={pocket} fill="#999" stroke="#000" transform="translate(218 126)" />
      <path d="M580.500 395v19M607.500 379v47M654.500 387v20M826.500 505v47M860.500 505v35M873.500 513v20" stroke="#000" />

      {dots.map(([x, y], i) => (
        <g key={i} transform={`translate(${Math.floor(x)} ${Math.floor(y)})`}>
          <path d="M-2-2h5v1h1v2H-4v-2h2z" fill="#555" />
          <path d="M-2-1h6v3h-6zM-1-2h3v1h-3z" fill="#f0f" />
          <path d="M-4 1h2v1h5V1h1v1H3v1h-5V2h-2z" fill="#444" />
        </g>
      ))}
      <ellipse cx="727" cy="464" rx="9.500" ry="5.500" fill="#999" stroke="#000" />
      <path d="M720 461l14 6M734 461l-14 6" stroke="#f0f" />

      {/* side holes */}
      <g stroke="#000" fill="#fff">
        <ellipse cx="454" cy="538" rx="5" ry="8" transform="rotate(-25 454 538)" />
        <ellipse cx="547" cy="551.500" rx="5" ry="4.500" />
        <ellipse cx="672" cy="664" rx="5" ry="8" transform="rotate(-25 672 664)" />
        <ellipse cx="765.500" cy="678" rx="5" ry="4.500" />
        <ellipse cx="842" cy="381" rx="1.500" ry="5" transform="rotate(12 842 381)" />
        <ellipse cx="1061" cy="507" rx="1.500" ry="5" transform="rotate(12 1061 507)" />
      </g>
      <path d="M450 533l6 1-1 5-5 2zM668 659l6 1-1 5-5 2z" fill="#ccc" />
      <path d="M640 545q0-4 5-5 4 1 2 3z" fill="#888" stroke="#000" />
      <Bore x={794.5} y={687} s={0.97} />
      <Bore x={822} y={650.5} s={0.58} />
      <Bore x={903.5} y={603} s={0.58} />
      <Bore x={931} y={587} s={0.58} />
      <Scoop x={1012.5} y={540} s={0.58} />
      <Scoop x={1039.5} y={545.5} s={0.97} />

      {/* toolpath */}
      <rect x="617" y="503" width="6" height="55" fill="#f90" />
      <rect x="623" y="503" width="1" height="52" fill="#fff" />
      <path d="M617 501h7v2h-7z" fill="#fff" />
      <path d="M620 502h3v2h-3zM661 526h1v8h-1zM660 524h2v2h-2z" fill="#0c0" />
      <path d="M658 526h2v10h-2z" fill="#f90" />
      <path d="M660 526h1v9h-1z" fill="#fff" />
      <path d="M791 400h3v3h-3z" fill="#fff" />
      <path d="M792 404h2v7h-2z" fill="#0e0" />
      <path d="M794 402h2v10h-2z" fill="#f90" />
      <path d="M830 422h7v9h-7z" fill="#fff" />
      <path d="M832 422h4v3h-4z" fill="#f90" />
      <path d="M830 428h6v3h-6z" fill="#0e0" />
      <path d="M617 501l43 25M659 518l171-98 6 3M795 400l41 23" fill="none" stroke="#f0f" />
      <path d="M658.500 518v6M830.500 419v4" stroke="#f00" />
      <path d="M622.500 492v12M658.500 525v3M795.500 399v3" stroke="#0ff" />
      <path d="M622.500 302v190" stroke="#f00" strokeDasharray="6 6" />
      <path d="M795.500 194v4M795.500 204v197" stroke="#e11" strokeDasharray="6 6" />

      {/* cutter */}
      <g fill="none" stroke="#ff0">
        <path d="M612.500 271q1-5 5-5.500h11q4 .5 5 5.500v22q-1 5-5 5.500h-11q-4-.5-5-5.500zM615.500 269v27M630.500 269v27M622.500 266v32M613 271q2 6 10 6t10-6" />
        <ellipse cx="623" cy="292.500" rx="9" ry="4.500" />
        <ellipse cx="623" cy="292.500" rx="4" ry="4.500" />
        <path d="M617 290l12 6M629 290l-12 6" />
      </g>

      {/* axis triad */}
      <path d="M296 876V837" stroke="#fff" strokeWidth="2" />
      <path d="M291.500 850l5-14 5 14q-5 3-10 0zM291.500 850q5-3 10 0M296.500 836v15" fill="none" stroke="#fff" />
      <path d="M296 876l19-10M315 861l13-3-9 8-4-2zM316 866l12-8M315 859l4 7" fill="none" stroke="#999" />
      <path d="M296 876l20 11" stroke="#0ff" strokeWidth="2" />
      <path d="M317 886l4-2 9 10h-12zM317 894l4-9M318 887l12 7" fill="none" stroke="#0ff" />
      <g fontFamily="Liberation Sans" fontSize="15">
        <text x="301" y="830" fill="#fff">Z</text>
        <text x="333" y="853" fill="#999">Y</text>
        <text x="336" y="889" fill="#0ff">X</text>
      </g>
    </svg>
  );
};

interface FieldProps {
  label: string;
  value?: string;
  wide?: string;
}

const Field = ({ label, value = '', wide = 'w-14' }: FieldProps) => (
  <input aria-label={label} defaultValue={value} className={`h-[22px] shrink-0 border border-[#aac] pl-[3px] text-xs outline-none ${wide}`} />
);

const StatusBar = () => (
  <footer className="flex h-[18px] items-start overflow-hidden pt-1">
    <span className="-ml-1.5 flex w-[29px] shrink-0 justify-center"><Icon name="wand" /></span>
    <Combo label="workplane" value="" className="w-[86px] bg-linear-to-b from-white from-50% to-[#ccc] to-50%" />
    <div className="mr-[14px] ml-1 flex shrink-0 gap-[3px]">
      {['X', 'Y', 'Z'].map((a, i) => (
        <button key={a} type="button" className={`relative flex h-6 w-6 items-start pl-0.5 text-sm leading-[14px] font-bold text-[#2ac] [text-shadow:1px_1px_0_#000] ${i === 0 ? 'rounded bg-[#ccc] ring-1 ring-[#777]' : ''}`}>
          {a}
          <svg viewBox="0 0 12 8" className="absolute top-1.5 right-0 h-2 w-3">
            <path d="M0 4l5-3 7 2-5 4z" fill={i === 2 ? '#fb6' : '#7cf'} stroke="#000" />
          </svg>
        </button>
      ))}
    </div>
    <span className="mr-[5px] ml-0.5 shrink-0"><Icon name="grid" /></span>
    <Field label="grid" wide="w-[53px]" />
    <div className="ml-[14px] flex shrink-0 gap-1">
      <Field label="x" value="0" />
      <Field label="y" value="-518.02" />
      <Field label="z" value="254.818" />
    </div>
    <div className="mx-[5px] flex w-[47px] shrink-0 justify-between">
      <Icon name="xyList" />
      <Icon name="snap" />
    </div>
    <Field label="position" wide="w-[90px]" />
    <div className="ml-[15px] flex w-8 shrink-0"><Icon name="screen" /></div>
    {[
      ['dim', 'mm'],
      ['cross', '0.01'],
      ['stock', '0.01'],
      ['diam', '16.0'],
      ['tick', ''],
    ].map(([icon, value]) => (
      <div key={icon} className="flex shrink-0">
        <span className="flex w-[29px] justify-center"><Icon name={icon} /></span>
        <Field label={icon} value={value} />
      </div>
    ))}
  </footer>
);

const bar = 'flex shrink-0 items-center border-[#999]';

const App: React.FC = () => (
  <div className="flex h-screen flex-col overflow-hidden border border-black bg-white font-['Noto_Sans','Noto_Sans_CJK_SC',sans-serif] text-xs text-black">
    <nav className="flex h-1 shrink-0 items-end gap-[15px] overflow-hidden bg-[#ccf] pl-px text-xs leading-3 text-[#553]">
      {['文件(F)', '查看(V)', '插入(I)', '显示(D)', '工具(T)', '帮助(H)'].map((m) => (
        <a key={m} href="#" className="shrink-0">{m}</a>
      ))}
    </nav>
    <div className="h-[3px] shrink-0 border-b border-white bg-[#dff]" />

    <header className="shrink-0 border-t border-[#999]">
      <div className="flex h-[30px] overflow-hidden border-b border-[#999]">
        <div className={`-ml-1.5 border-r ${bar}`}>
          <Tools names={['open', 'save', '|', 'print', '|', 'box', 'rapid', 'feed', 'start', 'lead', 'axis', 'points', 'millCalc', '|', 'collide', '|', 'hatch']} />
          <Combo label="strategy" value="轮廓一刀" className="ml-[25px] w-[170px]" />
          <span className="w-1" />
          <Tools names={['|', 'millStar', 'calc', 'ruler', '|', 'toolPair', 'crossArrows']} />
          <CloseCell />
        </div>
      </div>
      <div className="flex h-[31px] overflow-hidden border-b border-[#999]">
        <div className={`-ml-1.5 border-r ${bar}`}>
          <Tools names={['boxYellow', 'open', 'save', 'del', '|', 'unlock', 'list', 'blockNew', 'search', 'toolFrame', 'machine', 'abc', 'info', '|']} />
          <Tools names={['ball', 'pen', 'planeUp', 'gear', 'planeDown', 'link', 'serpPair', 'table', 'arrowRight', 'arrowUp', 'arrowDiag', 'clock', '|']} />
          <Tools names={['stripes', 'target', 'move', 'tree', '|', 'boxNew', 'starNew', 'mirror', 'letterT', 'toolPair']} />
          <CloseCell />
        </div>
        <div className={bar}>
          <Combo label="toolpath" value="12-D16" className={`mr-[3px] ml-0.5 ${shaded}`} />
          <Tools names={['|', 'move', 'serpPair', 'serpDel', 'link', 'swap', 'refresh']} />
        </div>
      </div>
      <div className="flex h-[30px] overflow-hidden">
        <div className={`-ml-1.5 border-r ${bar}`}>
          <Tools names={['starNew']} />
          <Combo label="pattern" value="" className={`mr-[11px] ml-2 ${shaded}`} />
          <Tools names={['starCursor', 'plus', 'ribs', '|', '~open', '~save', '|', '~loop', '~serp', '~boxHole', 'surf', 'penLine', '|', '~starCursor', '~eraser', '~undo', '~redo', '~bigX']} />
          <CloseCell />
        </div>
      </div>
      <div className="flex h-8 overflow-hidden border-b border-[#999]">
        <div className={`-ml-1.5 border-t border-r ${bar}`}>
          <Tools names={['redBall', '|', 'slab', 'ramp', '~slabCut', '~slab', '~slabCut', '~wallCut', '~spin', '|', 'bars', '|', '~route', '~route', '~save', '|', 'power']} />
          <CloseCell />
        </div>
        <div className={`border-t border-r pl-[3px] ${bar}`}>
          <Tools names={['hatNew']} />
          <ArrowButton />
          <Combo label="boundary" value="4" className={`mx-[3px] ${shaded}`} />
          <Tools names={['|', 'open', 'save', '|', 'loop', 'star', 'serp', 'boxHole', 'surf', 'penLine', '|', 'loopPen', 'eraser', '~undo', '~redo', 'bigX']} />
          <CloseCell />
        </div>
      </div>
    </header>

    <main className="flex min-h-0 flex-1">
      <SidePanel />
      <div className="min-w-0 flex-1 overflow-hidden">
        <Viewport />
      </div>
    </main>

    <div className="flex h-8 shrink-0 border-t border-[#999]">
      <div className={`-ml-1.5 border-r border-b ${bar}`}>
        <Tools names={['toolNew']} />
        <ArrowButton />
        <span className="w-0.5" />
        <Tools names={['toolFrame']} />
        <Combo label="tool" value="D16" className={`mr-1 ml-2 ${shaded}`} />
        <Sep />
        <span className="w-[50px]" />
        <Tools names={['|', 'axisTool', 'ballSplit', 'ballTilt', '|', 'pen', 'bigX']} />
        <CloseCell />
      </div>
    </div>
    <StatusBar />
  </div>
);

export default App;
